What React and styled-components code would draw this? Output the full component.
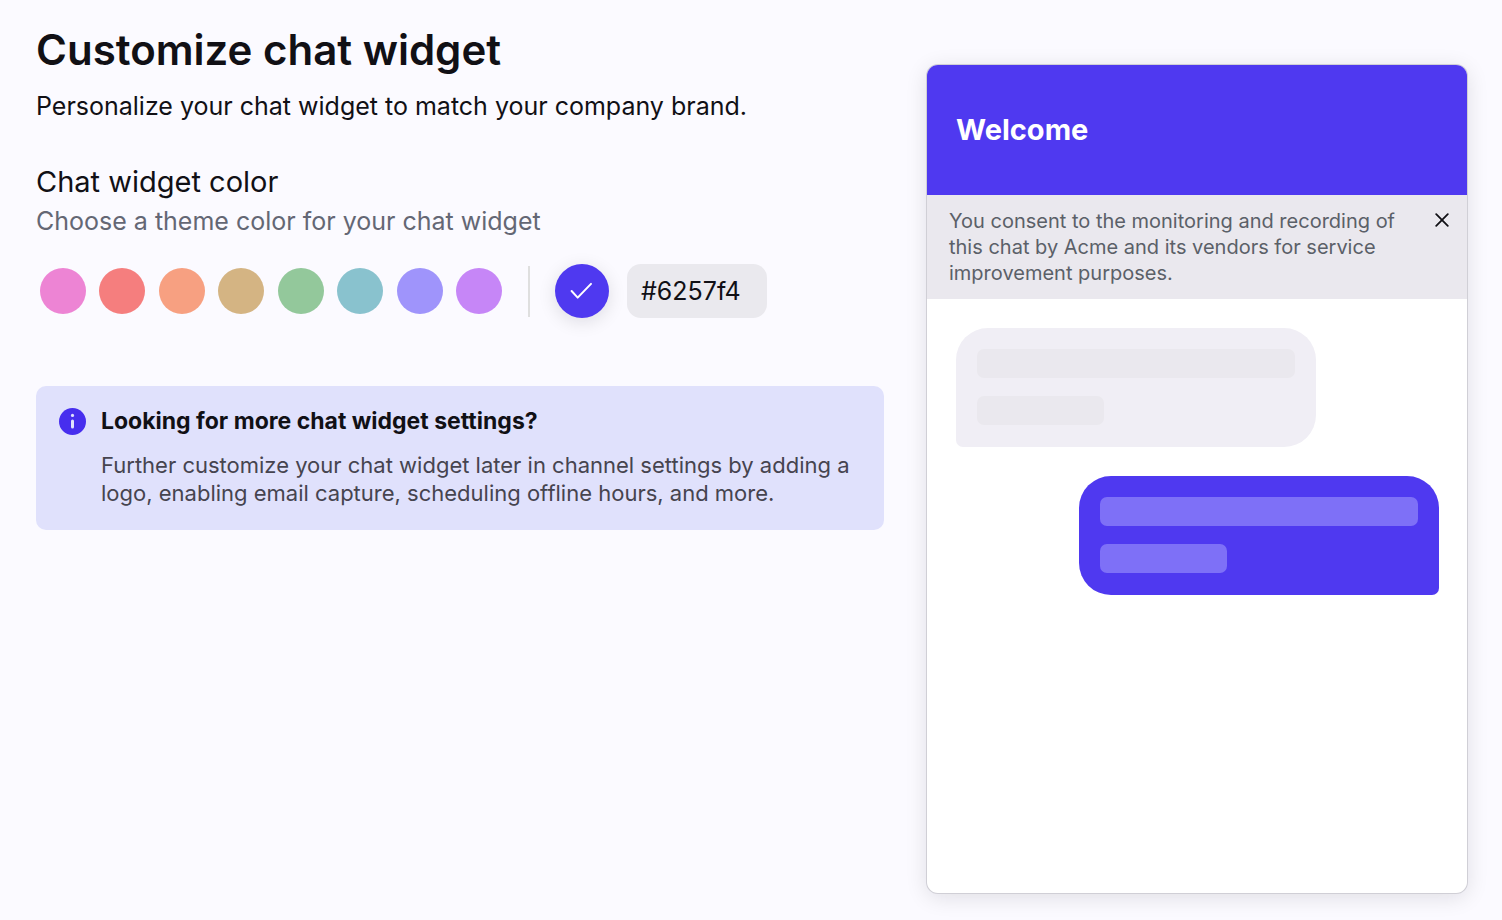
import { useState } from "react"
import styled, { createGlobalStyle } from "styled-components"

const swatches = [
  { name: "Pink", color: "#ed84d4" },
  { name: "Red", color: "#f57e7e" },
  { name: "Orange", color: "#f7a081" },
  { name: "Tan", color: "#d4b483" },
  { name: "Green", color: "#93c89b" },
  { name: "Teal", color: "#89c2ce" },
  { name: "Periwinkle", color: "#9f94fb" },
  { name: "Purple", color: "#c686f7" },
]

export default function App() {
  const [hex, setHex] = useState("#6257f4")
  const [showConsent, setShowConsent] = useState(true)

  return (
    <>
      <GlobalStyle />
      <Page>
        <Settings>
          <Title>Customize chat widget</Title>
          <Intro>Personalize your chat widget to match your company brand.</Intro>

          <SectionTitle>Chat widget color</SectionTitle>
          <SectionHint id="color-hint">Choose a theme color for your chat widget</SectionHint>

          <ColorRow>
            <SwatchList role="group" aria-labelledby="color-hint">
              {swatches.map((swatch) => (
                <Swatch
                  key={swatch.name}
                  type="button"
                  aria-label={swatch.name}
                  $color={swatch.color}
                  onClick={() => setHex(swatch.color)}
                />
              ))}
            </SwatchList>
            <Divider />
            <SelectedColor type="button" aria-label="Custom color" aria-pressed="true">
              <svg width="24" height="24" viewBox="0 0 24 24" fill="none" aria-hidden="true">
                <path d="M1.6 12L7.7 18.6L21 4.9" stroke="#fff" strokeWidth="2" strokeLinecap="round" strokeLinejoin="round" />
              </svg>
            </SelectedColor>
            <HexInput aria-label="Hex color" value={hex} onChange={(e) => setHex(e.target.value)} />
          </ColorRow>

          <Notice>
            <NoticeIcon viewBox="0 0 27 27" aria-hidden="true">
              <circle cx="13.5" cy="13.5" r="13.5" fill="#472eee" />
              <circle cx="13.5" cy="7.4" r="1.6" fill="#e0e1fc" />
              <rect x="12" y="11.6" width="3" height="9" rx="1.5" fill="#e0e1fc" />
            </NoticeIcon>
            <div>
              <NoticeTitle>Looking for more chat widget settings?</NoticeTitle>
              <NoticeText>
                Further customize your chat widget later in channel settings by adding a logo, enabling
                email capture, scheduling offline hours, and more.
              </NoticeText>
            </div>
          </Notice>
        </Settings>

        <Preview>
          <PreviewHeader>
            <PreviewTitle>Welcome</PreviewTitle>
          </PreviewHeader>
          {showConsent && (
            <Consent>
              <ConsentText>
                You consent to the monitoring and recording of this chat by Acme and its vendors for
                service improvement purposes.
              </ConsentText>
              <CloseButton type="button" aria-label="Dismiss" onClick={() => setShowConsent(false)}>
                <svg width="14" height="14" viewBox="0 0 14 14" aria-hidden="true">
                  <path d="M1.2 1.2L12.8 12.8M12.8 1.2L1.2 12.8" stroke="#111015" strokeWidth="1.8" strokeLinecap="round" />
                </svg>
              </CloseButton>
            </Consent>
          )}
          <Messages>
            <Bubble>
              <Line />
              <Line $short />
            </Bubble>
            <Bubble $own>
              <Line $own />
              <Line $own $short />
            </Bubble>
          </Messages>
        </Preview>
      </Page>
    </>
  )
}

const GlobalStyle = createGlobalStyle`
  * {
    box-sizing: border-box;
  }

  body {
    margin: 0;
    background: #fbfaff;
    color: #111015;
    font-family: Inter, "Liberation Sans", sans-serif;
  }

  h1, h2, h3, p {
    margin: 0;
  }

  button, input {
    font: inherit;
    color: inherit;
    border: 0;
    padding: 0;
  }

  button {
    cursor: pointer;
  }
`

const Page = styled.main`
  display: grid;
  grid-template-columns: minmax(0, 1fr) 540px;
  gap: 43px;
  min-height: 100vh;
  padding: 24px 35px 27px 36px;
`

const Settings = styled.section`
  display: flex;
  flex-direction: column;
`

const Title = styled.h1`
  font-size: 42px;
  line-height: 52px;
  font-weight: 600;
`

const Intro = styled.p`
  margin-top: 12px;
  font-size: 25px;
  line-height: 36px;
`

const SectionTitle = styled.h2`
  margin-top: 40px;
  font-size: 29px;
  line-height: 36px;
  font-weight: 400;
`

const SectionHint = styled.p`
  margin-top: 3px;
  font-size: 25px;
  line-height: 36px;
  color: #646774;
`

const ColorRow = styled.div`
  display: flex;
  align-items: center;
  margin-top: 25px;
  padding-left: 4px;
`

const SwatchList = styled.div`
  display: flex;
  justify-content: space-between;
  width: 462px;
`

const Swatch = styled.button`
  width: 46px;
  height: 46px;
  border-radius: 50%;
  background: ${(props) => props.$color};
`

const Divider = styled.span`
  width: 2px;
  height: 51px;
  margin: 0 25px 0 26px;
  background: #dfdfdf;
`

const SelectedColor = styled.button`
  display: flex;
  align-items: center;
  justify-content: center;
  width: 54px;
  height: 54px;
  border-radius: 50%;
  background: #4f39f0;
  box-shadow: 0 4px 18px rgba(17, 16, 21, 0.12);
`

const HexInput = styled.input`
  width: 140px;
  height: 54px;
  margin-left: 18px;
  padding: 0 14px;
  border-radius: 14px;
  background: #eae9ee;
  font-size: 25px;
`

const Notice = styled.aside`
  display: flex;
  gap: 15px;
  margin-top: 68px;
  padding: 20px 24px 23px 23px;
  border-radius: 10px;
  background: #e0e1fc;
`

const NoticeIcon = styled.svg`
  flex: none;
  width: 27px;
  height: 27px;
  margin-top: 2px;
`

const NoticeTitle = styled.h3`
  font-size: 23px;
  line-height: 30px;
  font-weight: 700;
`

const NoticeText = styled.p`
  margin-top: 15px;
  font-size: 22px;
  line-height: 28px;
  color: #46444f;
`

const Preview = styled.section`
  margin-top: 41px;
  border-radius: 11px;
  overflow: hidden;
  background: #fff;
  box-shadow: 0 0 0 1px #d0cfd6, 0 4px 22px rgba(17, 16, 21, 0.12);
`

const PreviewHeader = styled.header`
  padding: 47px 29px;
  background: #4f39f0;
`

const PreviewTitle = styled.h2`
  font-size: 29px;
  line-height: 36px;
  font-weight: 700;
  color: #fff;
`

const Consent = styled.div`
  display: flex;
  align-items: flex-start;
  justify-content: space-between;
  padding: 13px 18px 13px 22px;
  background: #eae8ee;
`

const ConsentText = styled.p`
  max-width: 450px;
  font-size: 20px;
  line-height: 26px;
  color: #5b6068;
`

const CloseButton = styled.button`
  display: flex;
  margin-top: 5px;
  background: none;
`

const Messages = styled.div`
  display: flex;
  flex-direction: column;
  gap: 29px;
  padding: 29px 28px 29px 29px;
`

const Bubble = styled.div`
  display: flex;
  flex-direction: column;
  gap: 18px;
  width: 360px;
  padding: 21px 21px 22px;
  align-self: ${(props) => (props.$own ? "flex-end" : "flex-start")};
  border-radius: ${(props) => (props.$own ? "32px 32px 7px 32px" : "32px 32px 32px 7px")};
  background: ${(props) => (props.$own ? "#4f39f0" : "#f0eef5")};
`

const Line = styled.div`
  width: ${(props) => (props.$short ? "40%" : "100%")};
  height: 29px;
  border-radius: 7px;
  background: ${(props) => (props.$own ? "#7e70f7" : "#eae8ee")};
`
